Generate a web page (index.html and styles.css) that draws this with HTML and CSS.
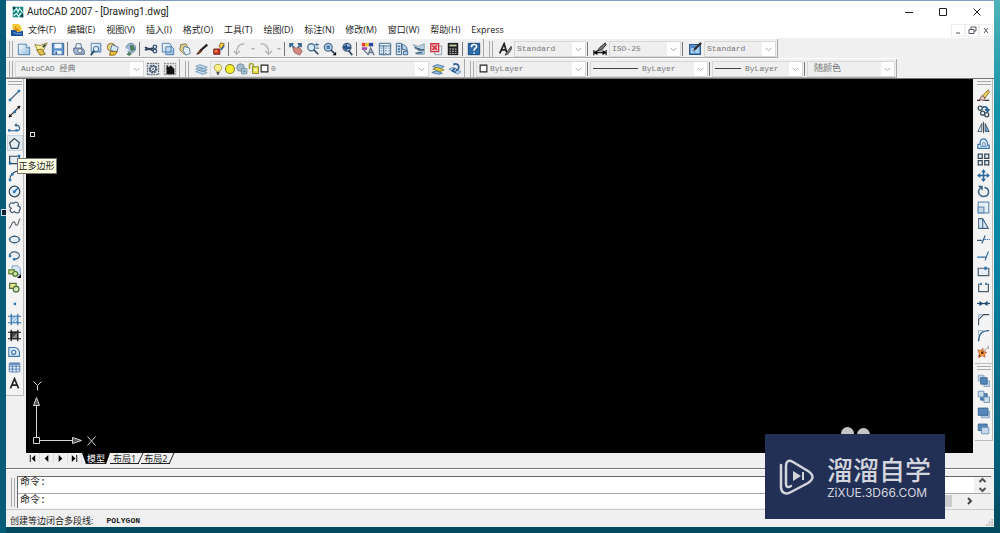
FILE: index.html
```html
<!DOCTYPE html>
<html lang="zh-CN">
<head>
<meta charset="utf-8">
<title>AutoCAD 2007 - [Drawing1.dwg]</title>
<link rel="stylesheet" href="styles.css">
</head>
<body class="desktop">
<svg class="sprite" aria-hidden="true">
<defs><linearGradient id="pale" x2="1" y2="1"><stop stop-color="#fff"/><stop offset="1" stop-color="#8fbbe0"/></linearGradient></defs>
<symbol id="app" viewBox="0 0 16 16"><path fill="#16867e" d="M1 1h14v14H1z"/><path fill="none" stroke="#e8fffa" stroke-width="1.500" d="M2 8l4-5 2 5 2-5 4 6M2 13l4-3 3 4 2-4 4 3"/><path fill="#073c48" d="M1 1h3v3H1zM12 11h3v4h-3z"/></symbol>
<symbol id="dwg" viewBox="0 0 16 16"><path fill="#f5c533" d="M2 0h8l4 4v6H2z"/><path fill="#d58f10" d="M5 3l8 7H5z"/><path fill="#174f9b" d="M0 8l5 0 4 3 7-2v7H0z"/><path stroke="#9cd0f7" d="M3 11l4 2h7" fill="none"/></symbol>
<symbol id="new" viewBox="0 0 16 16"><path fill="url(#pale)" stroke="#4779a8" d="M1.500 2.500h9l4 4v8h-13z"/><path fill="#fff" stroke="#4779a8" d="M10.500 2.500v4h4"/></symbol>
<symbol id="open" viewBox="0 0 16 16"><path fill="#fff2a0" stroke="#8a7a38" d="M1 3l6 1 8-3-4 8-4 6z"/><path fill="#e0c04f" stroke="#7b6b2a" d="M3 9l6-1 4 6-6 1z"/><path stroke="#243e4c" stroke-width="2" d="M10 6l3-3"/></symbol>
<symbol id="save" viewBox="0 0 16 16"><path fill="#5d93cb" stroke="#315f91" d="M1.500 1.500h13v13h-13z"/><path fill="#edf5fc" d="M4 2h8v5H4zM4 10h8v4H4z"/><path fill="#315f91" d="M5 11h2v3H5z"/></symbol>
<symbol id="print" viewBox="0 0 16 16"><path fill="#e9f1fa" stroke="#536b88" d="M4 7l1-5h5l1 5"/><path fill="#a9bdd8" stroke="#3f587a" d="M2 7h10l2 3v4H4l-2-3z"/><circle cx="9" cy="10" r="2.500" fill="#fff" stroke="#3f587a"/></symbol>
<symbol id="preview" viewBox="0 0 16 16"><path fill="url(#pale)" stroke="#4779a8" d="M2.500 1.500h11v10h-11z"/><circle cx="8" cy="8" r="3" fill="#dff1ff" stroke="#3c5e7d"/><path stroke="#23465f" stroke-width="2" d="M6 10l-4 5"/></symbol>
<symbol id="publish" viewBox="0 0 16 16"><circle cx="6" cy="6" r="4.500" fill="#e8d58b" stroke="#896b16"/><path fill="#d9e9f6" stroke="#47698a" d="M7 3l7 3-2 6-7-3z"/><path fill="#f0c541" stroke="#88600e" d="M5 11h8l-3 4H4z"/></symbol>
<symbol id="globe" viewBox="0 0 16 16"><circle cx="9" cy="7" r="5.500" fill="#9db9d4" stroke="#6d8398"/><path fill="#4f8161" d="M8 3l4 1 2 4-4 3-2-3zM7 11l3 3-3 2-3-2z"/><path fill="#e0edf7" d="M2 6l5 3-3 3z"/></symbol>
<symbol id="cut" viewBox="0 0 16 16"><path stroke="#2d4059" stroke-width="2" d="M1 6l10 4M1 9l10-2"/><g fill="none" stroke="#36597e" stroke-width="1.500"><circle cx="12.500" cy="5.500" r="2"/><circle cx="12.500" cy="10.500" r="2"/></g></symbol>
<symbol id="copy" viewBox="0 0 16 16"><path fill="url(#pale)" stroke="#3e77ac" d="M1.500 1.500h8l2 2v8h-10zM5.500 5.500h7l2 2v7h-9z"/></symbol>
<symbol id="paste" viewBox="0 0 16 16"><path fill="#dbc98a" stroke="#86754a" d="M3 3l6-1 4 7-6 5-5-5z"/><path fill="#e7f2fc" stroke="#547ba0" d="M7 5l6 2 1 6-5 2-3-5z"/></symbol>
<symbol id="brush" viewBox="0 0 16 16"><path stroke="#222" stroke-width="2.500" d="M14 3L6 10"/><path fill="#8f3f1c" stroke="#441c0b" d="M6 9l2 1-3 3-3 1z"/></symbol>
<symbol id="block" viewBox="0 0 16 16"><path fill="#ffce31" stroke="#826115" d="M10 1l4 1-3 6-3-3z"/><path fill="#cb3324" stroke="#681912" d="M2 8h7v6H2z"/><path fill="#ef8b4a" d="M3 9h3v3H3z"/><path stroke="#38659a" stroke-width="2" d="M10 9l4-5"/></symbol>
<symbol id="undo" viewBox="0 0 16 16"><path fill="none" stroke="#b4b4b4" stroke-width="1.500" d="M13 2C7 2 4 6 4 13M1 10l3 4 4-4"/></symbol>
<symbol id="redo" viewBox="0 0 16 16"><path fill="none" stroke="#b4b4b4" stroke-width="1.500" d="M2 2c6 0 9 4 9 11M7 10l4 4 4-4"/></symbol>
<symbol id="pan" viewBox="0 0 16 16"><path fill="#d08a7d" stroke="#986560" d="M4 5l4 2 4-1 3 5-3 4-6-3z"/><path stroke="#346990" stroke-width="1.500" d="M1 2l5 4M1 6V2h4M10 2h4v4M14 2l-4 4"/></symbol>
<symbol id="zoom" viewBox="0 0 16 16"><circle cx="6" cy="6" r="4" fill="#d4ecff" stroke="#53728f" stroke-width="1.500"/><path stroke="#334b65" stroke-width="2" d="M9 9l5 5"/><path stroke="#235e9b" d="M10 3h5M12.500 1v4M11 7h4"/></symbol>
<symbol id="zoomwin" viewBox="0 0 16 16"><circle cx="6" cy="6" r="4.500" fill="#b7d3ec" stroke="#53728f" stroke-width="1.500"/><path fill="#537bad" d="M4 4h4v4H4z"/><path stroke="#334b65" stroke-width="2" d="M9 9l4 4"/><path d="M11 15h4v-4z"/></symbol>
<symbol id="zoomprev" viewBox="0 0 16 16"><circle cx="8" cy="6" r="4.500" fill="#a8c9e7" stroke="#425b76" stroke-width="1.500"/><path fill="#234f86" d="M3 6l5-4v3h4v3H8v2z"/><path stroke="#334b65" stroke-width="2" d="M10 10l4 5"/></symbol>
<symbol id="props" viewBox="0 0 16 16"><path fill="#e83b32" d="M1 1h4v4H1z"/><path fill="#f2c329" d="M5 1h4v4H5z"/><path fill="#34449a" d="M9 1h5v4H9z"/><path fill="#a14db0" d="M1 6h6v3H1z"/><path fill="none" stroke="#63768a" stroke-width="1.500" d="M3 9l5 5M8 15l3-8 4 8M9 12h5"/></symbol>
<symbol id="dc" viewBox="0 0 16 16"><path fill="#e2eef8" stroke="#365f86" d="M1.500 1.500h13v13h-13zM1 4.500h14M6.500 4v11"/><path stroke="#4c7aa5" d="M3 7h2M3 10h2M3 13h2M8 7h2M12 7h2M8 10h2M12 10h2M8 13h2M12 13h2"/></symbol>
<symbol id="palette" viewBox="0 0 16 16"><path fill="#dceaf7" stroke="#365f86" d="M1.500 1.500h6v13h-6z"/><path stroke="#4c7aa5" stroke-width="2" d="M3 5h3M3 8h3M3 11h3"/><path fill="#b4d1eb" stroke="#365f86" d="M8 3c4 0 6 3 6 7l-6-2zM9.500 10.500h5v4h-5z"/></symbol>
<symbol id="sheet" viewBox="0 0 16 16"><path fill="#b9cedf" stroke="#8aa2b6" d="M1 3l6 2 7-3v12H6l3-4z"/><path stroke="#486f8d" stroke-width="2" d="M3 6l5 3h6M4 13l8-1"/></symbol>
<symbol id="markup" viewBox="0 0 16 16"><path fill="#e4e8ee" stroke="#8d98a4" d="M6.500 4.500h8v10h-8z"/><path fill="#f6c9cb" stroke="#cf3444" stroke-width="1.500" d="M2 2h9v9H2z"/><path stroke="#cf3444" stroke-width="2" d="M4 4l5 5M9 4L4 9"/></symbol>
<symbol id="calc" viewBox="0 0 16 16"><path fill="#222" d="M2 1h12v14H2z"/><path fill="#c6d7aa" d="M4 3h8v2H4z"/><path stroke="#ddd" stroke-dasharray="2 1" d="M4 8h8M4 10.500h8M4 13h8"/></symbol>
<symbol id="help" viewBox="0 0 16 16"><path fill="#2a6aa8" stroke="#103e70" d="M1.500 1.500h13v13h-13z"/><path fill="none" stroke="#fff" stroke-width="1.800" d="M5 6c0-4 6-4 6-1 0 2-3 2-3 5M8 12v1.500"/></symbol>
<symbol id="textstyle" viewBox="0 0 16 16"><path fill="none" stroke="#222" stroke-width="2" d="M2 13L7 2l3 10M4 9h5"/><path fill="#888" stroke="#333" d="M15 5l-5 7-2 3 4-2 4-6z"/></symbol>
<symbol id="dimstyle" viewBox="0 0 16 16"><path stroke="#222" stroke-width="1.500" d="M1 9v6M15 9v6M1 12h14"/><path d="M1 12l4-3v6zM15 12l-4-3v6z"/><path fill="#777" stroke="#222" d="M14 1L8 6l-3 4 5-1 5-6z"/></symbol>
<symbol id="tabstyle" viewBox="0 0 16 16"><path fill="#abd2f4" stroke="#1e538c" stroke-width="1.500" d="M2 3h12v11H2z"/><path fill="#4c87c4" d="M3 4h7v3H3z"/><path stroke="#1e538c" d="M5 9l3 3"/><path stroke="#333" stroke-width="2.500" d="M15 1L7 9"/></symbol>
<symbol id="gear" viewBox="0 0 16 16"><path fill="#d5dee7" stroke="#444" stroke-dasharray="2 1" d="M1.500 1.500h13v13h-13z"/><circle cx="8" cy="8" r="4" fill="#e4edf5" stroke="#456" stroke-width="2" stroke-dasharray="2 1"/><circle cx="8" cy="8" r="3" fill="none" stroke="#456"/><circle cx="8" cy="8" r="1" fill="#456"/></symbol>
<symbol id="home" viewBox="0 0 16 16"><path fill="#ddd" stroke="#777" stroke-dasharray="2 1" d="M1.500 1.500h13v13h-13z"/><path fill="#111" d="M3 8l1-1V4h2v2l3-2 4 4v6H4V8z"/></symbol>
<symbol id="layers" viewBox="0 0 16 16"><path fill="#c3d9ed" stroke="#6f92b4" d="M2 11l5-2 8 3-5 2zM2 8l5-2 8 3-5 2zM2 5l5-2 8 3-5 2z"/></symbol>
<symbol id="bulb" viewBox="0 0 16 16"><path fill="#fff48a" stroke="#948930" d="M5.500 11L3 7C2 0 14 0 13 7l-2.500 4z"/><path stroke="#555" stroke-width="2" d="M6 13h4M7 15h2"/></symbol>
<symbol id="sun" viewBox="0 0 16 16"><circle cx="8" cy="8" r="6" fill="#f4ec2e" stroke="#86822b" stroke-width="1.500"/></symbol>
<symbol id="freeze" viewBox="0 0 16 16"><circle cx="6" cy="6" r="5" fill="#a5bdd1" stroke="#61798e"/><path fill="#c4d8e6" stroke="#61798e" d="M7.500 7.500h7v7h-7z"/><circle cx="11" cy="11" r="2" fill="#7c9fb8"/></symbol>
<symbol id="lock" viewBox="0 0 16 16"><path fill="none" stroke="#a5a02a" stroke-width="2" d="M2 8V3c0-3 5-3 5 0v5"/><path fill="#e1dc36" stroke="#777225" d="M6 5h8v9H6z"/><path fill="#f4f1b4" d="M8 7h4v4H8z"/></symbol>
<symbol id="square" viewBox="0 0 16 16"><path fill="#fff" stroke="#222" stroke-width="2" d="M2 2h12v12H2z"/></symbol>
<symbol id="laycur" viewBox="0 0 16 16"><path fill="#98c2e6" stroke="#446f99" d="M2 5l5-2 8 2-5 3z"/><path fill="#e3d337" stroke="#87822f" d="M2 8l5-2 8 3-5 2z"/><path fill="#98c2e6" stroke="#446f99" d="M1 12l5-2 7 3-4 1z"/></symbol>
<symbol id="layprev" viewBox="0 0 16 16"><path fill="#b4d1ea" stroke="#6f92b4" d="M1 8l5-2 9 5-4 3z"/><path fill="none" stroke="#345f96" stroke-width="2" d="M6 3c6-3 9 4 3 7M8 7l-3 3 4 2"/></symbol>
<symbol id="line" viewBox="0 0 16 16"><path stroke="#3f586e" stroke-width="1.500" d="M2 14L14 2"/><path fill="#2876b4" d="M1 12h3v3H1zM12 1h3v3h-3z"/></symbol>
<symbol id="xline" viewBox="0 0 16 16"><path stroke="#222" stroke-width="1.300" d="M1 15L15 1"/><path d="M1 15l1-4 3 3zM15 1l-4 1 3 3z"/><path fill="#2876b4" d="M7 7h3v3H7z"/></symbol>
<symbol id="pline" viewBox="0 0 16 16"><path fill="none" stroke="#345f87" stroke-width="1.500" d="M1 12h10c5 0 4-7-1-7H8M10 3v4"/><path fill="#2876b4" d="M0 10h3v3H0zM9 10h3v3H9z"/></symbol>
<symbol id="polygon" viewBox="0 0 16 16"><path fill="#e5edf3" stroke="#344a5b" stroke-width="1.500" d="M8 2l6 5-2 7H4L2 7z"/></symbol>
<symbol id="rect" viewBox="0 0 16 16"><path fill="#e5edf3" stroke="#344a5b" stroke-width="1.500" d="M2 4h12v9H2z"/><path fill="#2876b4" d="M12 2h3v3h-3zM1 11h3v3H1z"/></symbol>
<symbol id="arc" viewBox="0 0 16 16"><path fill="none" stroke="#344a5b" stroke-width="1.500" d="M2 14C2 7 7 3 14 2"/><path fill="#2876b4" d="M1 12h3v3H1zM4 5h3v3H4z"/></symbol>
<symbol id="circle" viewBox="0 0 16 16"><circle cx="8" cy="8" r="6.500" fill="#e5f1fb" stroke="#344a5b" stroke-width="1.500"/><path stroke="#2876b4" stroke-width="2" d="M7 9l5-5"/><path fill="#2876b4" d="M6 7h3v3H6z"/></symbol>
<symbol id="cloud" viewBox="0 0 16 16"><path fill="none" stroke="#4d6375" stroke-width="1.500" d="M4 9C-1 6 3 0 7 3c2-3 8-1 5 3 5 1 3 5 2 5 1 5-5 4-6 2-4 3-7-1-4-4z"/></symbol>
<symbol id="spline" viewBox="0 0 16 16"><path fill="none" stroke="#4d5a67" stroke-width="1.300" d="M1 14c3 0 3-8 6-8 3 0 1 5 4 4 2 0 2-7 4-8"/></symbol>
<symbol id="ellipse" viewBox="0 0 16 16"><ellipse cx="8" cy="8" rx="6" ry="4" fill="#e5f1fb" stroke="#344a5b" stroke-width="1.500"/><path fill="#2876b4" d="M1 7h2v2H1zM13 7h2v2h-2zM7 3h2v2H7zM7 11h2v2H7z"/></symbol>
<symbol id="ellarc" viewBox="0 0 16 16"><path fill="none" stroke="#3f5f7b" stroke-width="1.500" d="M2 9C1 2 14 2 14 8c0 4-5 5-7 4"/><path fill="#2876b4" d="M1 7h3v3H1zM6 11h3v3H6z"/></symbol>
<symbol id="insert" viewBox="0 0 16 16"><path fill="#d9e8f5" stroke="#6a95be" d="M5 1h7l3 3v8H5z"/><path fill="#d9df8d" stroke="#57823c" stroke-width="1.500" d="M1 6h7v5H1z"/><circle cx="9" cy="11" r="3" fill="#d1e2a6" stroke="#47722c" stroke-width="1.500"/><path d="M11 16h5v-5z"/></symbol>
<symbol id="mkblock" viewBox="0 0 16 16"><path fill="#e3e593" stroke="#57723c" stroke-width="1.500" d="M2 3h8v6H2z"/><circle cx="10" cy="10" r="3.500" fill="#dce9c2" stroke="#47722c" stroke-width="1.500"/></symbol>
<symbol id="point" viewBox="0 0 16 16"><path fill="#2876b4" d="M7 7h3v3H7z"/></symbol>
<symbol id="hatch" viewBox="0 0 16 16"><path fill="#c9e1f5" d="M3 3h10v10H3z"/><path stroke="#3973a7" stroke-width="1.500" d="M0 4h16M0 12h16M4 1v14M12 1v14"/><path stroke="#6fa1cf" d="M4 9l5-5M5 12l7-7M9 12l3-3"/></symbol>
<symbol id="grad" viewBox="0 0 16 16"><path fill="#888" d="M3 3h10v10H3z"/><path fill="#444" d="M3 3h10L3 13z"/><path stroke="#151a1f" stroke-width="1.500" d="M0 4h16M0 12h16M4 1v14M12 1v14"/></symbol>
<symbol id="region" viewBox="0 0 16 16"><path fill="#dbeaf7" stroke="#3e77ac" stroke-width="1.300" d="M1 3h7c5 0 7 5 6 11H1z"/><circle cx="7" cy="9" r="2.500" fill="#fff" stroke="#3e77ac" stroke-width="1.500"/></symbol>
<symbol id="table" viewBox="0 0 16 16"><path fill="#dbeaf7" stroke="#4f78ad" d="M1.500 2.500h13v11h-13zM1 6.500h14M1 10h14M5.500 3v11M10 3v11"/><path fill="#6890c2" d="M2 2h12v3H2z"/></symbol>
<symbol id="mtext" viewBox="0 0 16 16"><path fill="none" stroke="#222" stroke-width="2" d="M3 14L8 2l5 12M5 10h6"/></symbol>
<symbol id="erase" viewBox="0 0 16 16"><path fill="#eed14d" stroke="#6e6130" d="M14 1L7 8l3 3 5-7z"/><path fill="#e8c9c6" stroke="#714b4b" d="M6 8l4 3-2 3-5-1z"/><path stroke="#333" stroke-width="1.500" d="M0 14h4M9 14h6"/></symbol>
<symbol id="copyobj" viewBox="0 0 16 16"><g fill="#eee" stroke="#344a5b" stroke-width="1.500"><circle cx="4" cy="4" r="2.500"/><circle cx="7" cy="10" r="2.500"/><circle cx="12" cy="12" r="2.500"/></g><path fill="none" stroke="#205b91" stroke-width="2" d="M7 3c4-2 6 0 6 4M10 5l3 3 2-3"/></symbol>
<symbol id="mirror" viewBox="0 0 16 16"><path fill="#d9e3ec" stroke="#344a5b" d="M6 3v10H1z"/><path fill="#70a4d5" stroke="#344a5b" d="M10 3v10h5z"/><path stroke="#222" d="M8 1v14"/></symbol>
<symbol id="offset" viewBox="0 0 16 16"><path fill="#dceaf7" stroke="#3e77ac" stroke-width="1.500" d="M1 14h14v-4h-2C14 0 2 0 4 9H1z"/><path fill="none" stroke="#3e77ac" d="M4 11.500h8M7 11c-1-6 4-6 3 0"/></symbol>
<symbol id="array" viewBox="0 0 16 16"><path fill="#e5ebef" stroke="#344a5b" stroke-width="1.500" d="M1.500 1.500h5v5h-5zM9.500 1.500h5v5h-5zM1.500 9.500h5v5h-5zM9.500 9.500h5v5h-5z"/></symbol>
<symbol id="move" viewBox="0 0 16 16"><path stroke="#2e699e" stroke-width="2" d="M8 2v12M2 8h12"/><path fill="#2e699e" d="M8 0l3 4H5zM8 16l3-4H5zM0 8l4-3v6zM16 8l-4-3v6z"/></symbol>
<symbol id="rotate" viewBox="0 0 16 16"><path fill="none" stroke="#456b8d" stroke-width="2" d="M4 4c-5 5 0 11 5 10 7-1 7-10 0-11"/><path fill="#345f87" d="M1 1h6v6z"/></symbol>
<symbol id="scale" viewBox="0 0 16 16"><path fill="#e7f0f8" stroke="#6a91b5" stroke-width="1.500" d="M1.500 1.500h13v13h-13z"/><path fill="#c5d8ea" stroke="#6a91b5" stroke-width="1.500" d="M1.500 7.500h7v7h-7z"/></symbol>
<symbol id="stretch" viewBox="0 0 16 16"><path fill="#dceaf6" stroke="#47688a" stroke-width="1.300" d="M2 2h5v12H2zM7 2l7 12H7"/></symbol>
<symbol id="trim" viewBox="0 0 16 16"><path stroke="#355a7b" stroke-width="1.500" d="M0 9h6M6 13l4-10"/><path stroke="#2d78b5" stroke-width="1.500" stroke-dasharray="2 1" d="M9 8h7"/></symbol>
<symbol id="extend" viewBox="0 0 16 16"><path stroke="#2d78b5" stroke-width="1.500" d="M0 10h6M10 14l4-11"/><path stroke="#355a7b" stroke-width="1.500" d="M6 10h5"/></symbol>
<symbol id="breakpt" viewBox="0 0 16 16"><path fill="#e7edf2" stroke="#4d6170" stroke-width="1.500" d="M1.500 4h13v9h-13z"/><path fill="#2876b4" d="M9 2h3v4H9z"/></symbol>
<symbol id="breaks" viewBox="0 0 16 16"><path fill="none" stroke="#4d6170" stroke-width="1.500" d="M5 4H2v9h12V4h-3"/><path fill="#2876b4" d="M4 2h2v3H4zM10 2h2v3h-2z"/></symbol>
<symbol id="join" viewBox="0 0 16 16"><path stroke="#244c70" stroke-width="1.500" d="M0 8h16"/><path fill="#244c70" d="M3 5l5 3-5 3zM13 5L8 8l5 3z"/></symbol>
<symbol id="chamfer" viewBox="0 0 16 16"><path fill="none" stroke="#394a58" stroke-width="1.300" d="M2 15V8l6-6h7"/><path fill="none" stroke="#71a0ce" d="M2 7V2h5"/></symbol>
<symbol id="fillet" viewBox="0 0 16 16"><path fill="none" stroke="#315e8b" stroke-width="1.800" d="M2 15C2 6 6 2 15 2"/><path fill="none" stroke="#7aa4ce" d="M2 8V2h6"/></symbol>
<symbol id="explode" viewBox="0 0 16 16"><path fill="#f6a43a" stroke="#b85a34" d="M1 6l4 1 2-3 1 4 4 1-3 2 1 4-4-2-4 3 1-5z"/><path fill="#6f2818" d="M5 8h3v3H5zM2 12h2v2H2z"/><path fill="none" stroke="#aaa" stroke-width="1.500" d="M9 7l2-2M11 4h3V1"/></symbol>
<symbol id="front" viewBox="0 0 16 16"><path fill="#bcd2e7" stroke="#819fbd" d="M1.500 1.500h7v7h-7zM8.500 8.500h7v7h-7z"/><path fill="#5687bb" stroke="#315d8a" d="M4.500 4.500h8v8h-8z"/></symbol>
<symbol id="back" viewBox="0 0 16 16"><path fill="#5687bb" stroke="#315d8a" d="M4.500 4.500h8v8h-8z"/><path fill="#c9dceb" stroke="#6386a9" d="M1.500 1.500h7v7h-7zM8.500 8.500h7v7h-7z"/></symbol>
<symbol id="above" viewBox="0 0 16 16"><path fill="#b7cce2" stroke="#819fbd" d="M5.500 6.500h10v8h-10z"/><path fill="#5687bb" stroke="#315d8a" d="M1.500 2.500h12v9h-12z"/></symbol>
<symbol id="under" viewBox="0 0 16 16"><path fill="#5687bb" stroke="#315d8a" d="M1.500 2.500h11v8h-11z"/><path fill="#c5d9ec" stroke="#6386a9" d="M5.500 6.500h9v8h-9z"/></symbol>
<symbol id="chev" viewBox="0 0 16 16"><path fill="none" stroke="#999" stroke-width="1.500" d="M3 6l5 5 5-5"/></symbol>
</svg>

<div class="window">
  <header class="titlebar">
    <svg class="icon small"><use href="#app"/></svg>
    <h1 class="title">AutoCAD 2007 - [Drawing1.dwg]</h1>
    <div class="captions">
      <button class="caption" aria-label="最小化"><svg viewBox="0 0 10 10"><path d="M1 5.500h8"/></svg></button>
      <button class="caption" aria-label="最大化"><svg viewBox="0 0 10 10"><path d="M1.500 1.500h7v7h-7z"/></svg></button>
      <button class="caption" aria-label="关闭"><svg viewBox="0 0 10 10"><path d="M1.500 1.500l7 7M8.500 1.500l-7 7"/></svg></button>
    </div>
  </header>
  <nav class="menubar">
    <svg class="icon small"><use href="#dwg"/></svg>
    <div class="menus"><button class="menu">文件(F)</button><button class="menu">编辑(E)</button><button class="menu">视图(V)</button><button class="menu">插入(I)</button><button class="menu">格式(O)</button><button class="menu">工具(T)</button><button class="menu">绘图(D)</button><button class="menu">标注(N)</button><button class="menu">修改(M)</button><button class="menu">窗口(W)</button><button class="menu">帮助(H)</button><button class="menu">Express</button></div>
    <div class="mdi">
      <button aria-label="最小化文档"><svg viewBox="0 0 10 10"><path d="M3 8h4"/></svg></button>
      <button aria-label="还原文档"><svg viewBox="0 0 10 10"><path d="M4 4V2h5v4H7M2 4.500h5v4H2z"/></svg></button>
      <button aria-label="关闭文档"><svg viewBox="0 0 10 10"><path d="M3 3l4 5M7 3L3 8"/></svg></button>
    </div>
  </nav>

  <div class="toolbars">
    <div class="row">
      <div class="bar">
        <i class="grip"></i>
        <button class="tool" aria-label="新建"><svg class="icon"><use href="#new"/></svg></button>
        <button class="tool" aria-label="打开"><svg class="icon"><use href="#open"/></svg></button>
        <button class="tool" aria-label="保存"><svg class="icon"><use href="#save"/></svg></button>
        <i class="sep"></i>
        <button class="tool" aria-label="打印"><svg class="icon"><use href="#print"/></svg></button>
        <button class="tool" aria-label="打印预览"><svg class="icon"><use href="#preview"/></svg></button>
        <button class="tool" aria-label="发布"><svg class="icon"><use href="#publish"/></svg></button>
        <button class="tool" aria-label="三维 DWF"><svg class="icon"><use href="#globe"/></svg></button>
        <i class="sep"></i>
        <button class="tool" aria-label="剪切"><svg class="icon"><use href="#cut"/></svg></button>
        <button class="tool" aria-label="复制"><svg class="icon"><use href="#copy"/></svg></button>
        <button class="tool" aria-label="粘贴"><svg class="icon"><use href="#paste"/></svg></button>
        <button class="tool" aria-label="特性匹配"><svg class="icon"><use href="#brush"/></svg></button>
        <button class="tool" aria-label="块编辑器"><svg class="icon"><use href="#block"/></svg></button>
        <i class="sep"></i>
        <button class="tool" aria-label="放弃"><svg class="icon"><use href="#undo"/></svg></button>
        <button class="drop" aria-label="放弃列表"></button>
        <button class="tool" aria-label="重做"><svg class="icon"><use href="#redo"/></svg></button>
        <button class="drop" aria-label="重做列表"></button>
        <i class="sep"></i>
        <button class="tool" aria-label="实时平移"><svg class="icon"><use href="#pan"/></svg></button>
        <button class="tool" aria-label="实时缩放"><svg class="icon"><use href="#zoom"/></svg></button>
        <button class="tool" aria-label="窗口缩放"><svg class="icon"><use href="#zoomwin"/></svg></button>
        <button class="tool" aria-label="缩放上一个"><svg class="icon"><use href="#zoomprev"/></svg></button>
        <i class="sep"></i>
        <button class="tool" aria-label="特性"><svg class="icon"><use href="#props"/></svg></button>
        <button class="tool" aria-label="设计中心"><svg class="icon"><use href="#dc"/></svg></button>
        <button class="tool" aria-label="工具选项板"><svg class="icon"><use href="#palette"/></svg></button>
        <button class="tool" aria-label="图纸集管理器"><svg class="icon"><use href="#sheet"/></svg></button>
        <button class="tool" aria-label="标记集管理器"><svg class="icon"><use href="#markup"/></svg></button>
        <button class="tool" aria-label="快速计算器"><svg class="icon"><use href="#calc"/></svg></button>
        <i class="sep"></i>
        <button class="tool" aria-label="帮助"><svg class="icon"><use href="#help"/></svg></button>
      </div>
      <div class="bar">
        <i class="grip"></i>
        <button class="tool wide" aria-label="文字样式管理器"><svg class="icon"><use href="#textstyle"/></svg></button>
        <label class="combo style"><select aria-label="文字样式"><option>Standard</option></select><svg class="chev"><use href="#chev"/></svg></label>
        <i class="sep"></i>
        <button class="tool wide" aria-label="标注样式管理器"><svg class="icon"><use href="#dimstyle"/></svg></button>
        <label class="combo style"><select aria-label="标注样式"><option>ISO-25</option></select><svg class="chev"><use href="#chev"/></svg></label>
        <i class="sep"></i>
        <button class="tool wide" aria-label="表格样式管理器"><svg class="icon"><use href="#tabstyle"/></svg></button>
        <label class="combo style"><select aria-label="表格样式"><option>Standard</option></select><svg class="chev"><use href="#chev"/></svg></label>
      </div>
    </div>
    <div class="row">
      <div class="bar">
        <i class="grip"></i>
        <label class="combo workspace-list"><select aria-label="工作空间"><option>AutoCAD 经典</option></select><svg class="chev"><use href="#chev"/></svg></label>
        <button class="tool" aria-label="工作空间设置"><svg class="icon"><use href="#gear"/></svg></button>
        <button class="tool" aria-label="我的工作空间"><svg class="icon"><use href="#home"/></svg></button>
      </div>
      <div class="bar">
        <i class="grip"></i>
        <button class="tool wide" aria-label="图层特性管理器"><svg class="icon"><use href="#layers"/></svg></button>
        <label class="combo layer-list"><span class="states"><svg><use href="#bulb"/></svg><svg><use href="#sun"/></svg><svg><use href="#freeze"/></svg><svg><use href="#lock"/></svg><svg class="swatch"><use href="#square"/></svg></span><select aria-label="图层"><option>0</option></select><svg class="chev"><use href="#chev"/></svg></label>
        <button class="tool" aria-label="置为当前图层"><svg class="icon"><use href="#laycur"/></svg></button>
        <button class="tool" aria-label="上一个图层"><svg class="icon"><use href="#layprev"/></svg></button>
      </div>
      <div class="bar">
        <i class="grip"></i>
        <label class="combo color-list"><svg class="swatch"><use href="#square"/></svg><select aria-label="颜色"><option>ByLayer</option></select><svg class="chev"><use href="#chev"/></svg></label>
        <i class="sep"></i>
        <label class="combo type-list"><i class="stroke long"></i><select aria-label="线型"><option>ByLayer</option></select><svg class="chev"><use href="#chev"/></svg></label>
        <i class="sep"></i>
        <label class="combo weight-list"><i class="stroke"></i><select aria-label="线宽"><option>ByLayer</option></select><svg class="chev"><use href="#chev"/></svg></label>
        <i class="sep"></i>
        <label class="combo plot-list"><select aria-label="打印样式"><option>随颜色</option></select><svg class="chev"><use href="#chev"/></svg></label>
      </div>
    </div>
  </div>

  <main class="workspace">
    <aside class="side">
      <div class="vbar">
        <i class="vgrip"></i>
        <button class="vtool" aria-label="直线"><svg><use href="#line"/></svg></button>
        <button class="vtool" aria-label="构造线"><svg><use href="#xline"/></svg></button>
        <button class="vtool" aria-label="多段线"><svg><use href="#pline"/></svg></button>
        <button class="vtool hover" aria-describedby="tip" aria-label="正多边形"><svg><use href="#polygon"/></svg><span class="tooltip" id="tip" role="tooltip">正多边形</span></button>
        <button class="vtool" aria-label="矩形"><svg><use href="#rect"/></svg></button>
        <button class="vtool" aria-label="圆弧"><svg><use href="#arc"/></svg></button>
        <button class="vtool" aria-label="圆"><svg><use href="#circle"/></svg></button>
        <button class="vtool" aria-label="修订云线"><svg><use href="#cloud"/></svg></button>
        <button class="vtool" aria-label="样条曲线"><svg><use href="#spline"/></svg></button>
        <button class="vtool" aria-label="椭圆"><svg><use href="#ellipse"/></svg></button>
        <button class="vtool" aria-label="椭圆弧"><svg><use href="#ellarc"/></svg></button>
        <button class="vtool" aria-label="插入块"><svg><use href="#insert"/></svg></button>
        <button class="vtool" aria-label="创建块"><svg><use href="#mkblock"/></svg></button>
        <button class="vtool" aria-label="点"><svg><use href="#point"/></svg></button>
        <button class="vtool" aria-label="图案填充"><svg><use href="#hatch"/></svg></button>
        <button class="vtool" aria-label="渐变色"><svg><use href="#grad"/></svg></button>
        <button class="vtool" aria-label="面域"><svg><use href="#region"/></svg></button>
        <button class="vtool" aria-label="表格"><svg><use href="#table"/></svg></button>
        <button class="vtool" aria-label="多行文字"><svg><use href="#mtext"/></svg></button>
      </div>
    </aside>
    <section class="document">
      <div class="canvas">
        <i class="pickbox"></i>
        <svg class="ucs" viewBox="0 0 68 70"><g fill="none" stroke="#d5d5d5"><path d="M3.500 57.500h6v6h-6zM6.500 57V19M10 60.500h36"/><path fill="#555" d="M3.500 25.500l3-8 3 8zM42.500 57.500l9 3-9 3z"/><path d="M3.500 1.500l4 4 4-4M7.500 5.500v5M57.500 56.500l8 9M65.500 56.500l-8 9"/></g></svg>
        <i class="blob first"></i><i class="blob"></i>
      </div>
      <div class="tabs">
        <button class="nav" aria-label="第一个"><svg viewBox="0 0 10 10"><path d="M2 1h1v8H2zM8 1v8L4 5z"/></svg></button>
        <button class="nav" aria-label="上一个"><svg viewBox="0 0 10 10"><path d="M7 1v8L3 5z"/></svg></button>
        <button class="nav" aria-label="下一个"><svg viewBox="0 0 10 10"><path d="M3 1v8l4-4z"/></svg></button>
        <button class="nav" aria-label="最后一个"><svg viewBox="0 0 10 10"><path d="M7 1h1v8H7zM2 1v8l4-4z"/></svg></button>
        <button class="tab active">模型</button><button class="tab">布局1</button><button class="tab">布局2</button>
      </div>
    </section>
    <aside class="side right">
      <div class="vbar">
        <i class="vgrip"></i>
        <button class="vtool" aria-label="删除"><svg><use href="#erase"/></svg></button>
        <button class="vtool" aria-label="复制对象"><svg><use href="#copyobj"/></svg></button>
        <button class="vtool" aria-label="镜像"><svg><use href="#mirror"/></svg></button>
        <button class="vtool" aria-label="偏移"><svg><use href="#offset"/></svg></button>
        <button class="vtool" aria-label="阵列"><svg><use href="#array"/></svg></button>
        <button class="vtool" aria-label="移动"><svg><use href="#move"/></svg></button>
        <button class="vtool" aria-label="旋转"><svg><use href="#rotate"/></svg></button>
        <button class="vtool" aria-label="缩放"><svg><use href="#scale"/></svg></button>
        <button class="vtool" aria-label="拉伸"><svg><use href="#stretch"/></svg></button>
        <button class="vtool" aria-label="修剪"><svg><use href="#trim"/></svg></button>
        <button class="vtool" aria-label="延伸"><svg><use href="#extend"/></svg></button>
        <button class="vtool" aria-label="打断于点"><svg><use href="#breakpt"/></svg></button>
        <button class="vtool" aria-label="打断"><svg><use href="#breaks"/></svg></button>
        <button class="vtool" aria-label="合并"><svg><use href="#join"/></svg></button>
        <button class="vtool" aria-label="倒角"><svg><use href="#chamfer"/></svg></button>
        <button class="vtool" aria-label="圆角"><svg><use href="#fillet"/></svg></button>
        <button class="vtool" aria-label="分解"><svg><use href="#explode"/></svg></button>
      </div>
      <div class="vbar">
        <i class="vgrip"></i>
        <button class="vtool" aria-label="前置"><svg><use href="#front"/></svg></button>
        <button class="vtool" aria-label="后置"><svg><use href="#back"/></svg></button>
        <button class="vtool" aria-label="置于对象之上"><svg><use href="#above"/></svg></button>
        <button class="vtool" aria-label="置于对象之下"><svg><use href="#under"/></svg></button>
      </div>
    </aside>
  </main>

  <section class="command">
    <i class="grip"></i>
    <div class="console">
      <div class="history"><output>命令:</output><span class="vscroll"><svg viewBox="0 0 10 16"><path d="M2 5l3-3 3 3M2 11l3 3 3-3"/></svg></span></div>
      <div class="entry"><label for="cmd">命令:</label><input id="cmd" type="text"><span class="hscroll"><i class="thumb"></i><svg viewBox="0 0 10 10"><path d="M3 2l3 3-3 3"/></svg></span></div>
    </div>
  </section>
  <footer class="status"><span>创建等边闭合多段线:</span><span class="cmdname">POLYGON</span><svg class="resize" viewBox="0 0 10 10"><path d="M7 1h2v2H7zM7 4h2v2H7zM4 4h2v2H4zM7 7h2v2H7zM4 7h2v2H4zM1 7h2v2H1z"/></svg></footer>
</div>
<i class="marker"></i>
<div class="brand">
  <svg class="logo" viewBox="0 0 36 38"><g fill="none" stroke="#d3d5dd" stroke-width="2.500" stroke-linejoin="round" stroke-linecap="round"><path d="M2 7v22c0 6 5 8 10 5l17-9c6-4 6-8 0-12L14 4C9 1 7 4 7 8v18c0 3 2 4 5 2"/></g><path fill="#d3d5dd" d="M14 13l8 5-8 5zM23 14h2v8h-2z"/></svg>
  <div class="words"><strong>溜溜自学</strong><span>ZiXUE.3D66.COM</span></div>
</div>
</body>
</html>
```
FILE: styles.css
```css
* { box-sizing: border-box; }

.desktop {
  margin: 0;
  height: 100vh;
  padding: 0 6px 6px;
  position: relative;
  overflow: hidden;
  background:
    linear-gradient(90deg, #075d77 0 6px, transparent 6px),
    linear-gradient(180deg, #4fb3ba 0%, #1694a8 20%, #0784a4 50%, #05607a 85%, #04495f 100%);
  font-family: "Open Sans", "Noto Sans CJK SC", sans-serif;
  font-size: 9px;
  color: #222;
}

.sprite { position: absolute; width: 0; height: 0; }

button {
  border: 0;
  padding: 0;
  background: none;
  font: inherit;
  color: inherit;
}

.window {
  height: 100%;
  display: flex;
  flex-direction: column;
  background: #f0f0f0;
  border-top: 1px solid #7d9cc0;
}

.icon { width: 14px; height: 14px; display: block; flex: none; }
.small { width: 12px; height: 12px; }

/* Title and menus */
.titlebar {
  height: 21px;
  display: flex;
  align-items: center;
  padding-left: 6px;
  gap: 3px;
  background: #fff;
}
.title { margin: 0; font: 400 10px/14px Roboto, sans-serif; }
.captions { margin-left: auto; display: flex; }
.caption { width: 34px; height: 20px; display: grid; place-items: center; }
.caption svg { width: 10px; height: 10px; fill: none; stroke: #222; }

.menubar {
  height: 16px;
  display: flex;
  align-items: center;
  padding-left: 5px;
  background: #fff;
}
.menus { display: flex; gap: 1px; }
.menu { line-height: 14px; padding: 0 5px; white-space: nowrap; }
.mdi { margin-left: auto; display: flex; padding-right: 1px; }
.mdi button { width: 14px; height: 13px; border: 1px solid #eee; display: grid; place-items: center; }
.mdi svg { width: 10px; height: 10px; fill: none; stroke: #556; }

/* Docked toolbars */
.toolbars { border-bottom: 1px solid #777; }
.row { display: flex; height: 20px; }
.bar {
  display: flex;
  align-items: center;
  padding: 0 2px 0 3px;
  border: solid #fff;
  border-width: 1px 0 0;
  box-shadow: inset -1px -1px #a9a9a9;
}
.bar + .bar { padding-left: 5px; }
.grip {
  width: 4px;
  height: 16px;
  margin-right: 2px;
  border: 1px solid #aaa;
  border-width: 0 1px;
  flex: none;
}
.sep { width: 1px; height: 14px; margin: 0 2px 0 1px; background: #777; flex: none; }
.tool { width: 17px; height: 17px; display: grid; place-items: center; flex: none; }
.wide { width: 19px; }
.drop { width: 9px; height: 16px; display: grid; place-items: center; }
.drop::before { content: ""; border: 2px solid transparent; border-top-color: #aaa; border-bottom: 0; }

.combo {
  height: 16px;
  display: flex;
  align-items: center;
  border: 1px solid #d8d8d8;
  background: #efefef;
  color: #777;
}
.combo select {
  flex: 1;
  min-width: 0;
  height: 14px;
  border: 0;
  padding: 0 0 0 2px;
  appearance: none;
  background: none;
  color: inherit;
  font: 8px/14px "Liberation Mono", "Noto Sans CJK SC", monospace;
}
.chev { width: 13px; height: 14px; padding: 2px; background: #fff; flex: none; }
.swatch { width: 9px; height: 9px; margin-left: 2px; flex: none; }
.states { display: flex; align-items: center; padding-left: 1px; }
.states svg { width: 12px; height: 12px; }
.states .swatch { width: 9px; height: 9px; margin-left: 0; }
.stroke { width: 26px; height: 1px; margin: 0 2px; background: #444; flex: none; }
.stroke.long { width: 45px; }
.style { width: 72px; }
.workspace-list { width: 129px; }
.workspace-list select { padding-left: 5px; }
.layer-list { width: 219px; }
.color-list { width: 110px; }
.type-list { width: 118px; }
.weight-list { width: 91px; }
.plot-list { width: 88px; }
.plot-list select { font-size: 9px; padding-left: 6px; }

/* Drawing area */
.workspace { flex: 1; min-height: 0; display: flex; }
.side { width: 20px; flex: none; }
.right { width: 21px; padding-left: 2px; }
.vbar {
  width: 18px;
  padding: 2px 0 4px;
  display: flex;
  flex-direction: column;
  align-items: center;
  background: #f4f4f4;
  border: solid #bbb;
  border-width: 0 1px 1px 0;
}
.vgrip { width: 14px; height: 4px; margin-bottom: 2px; border: 1px solid #aaa; border-width: 1px 0; }
.vtool { width: 16px; height: 16px; display: grid; place-items: center; position: relative; flex: none; }
.vtool svg { width: 13px; height: 13px; }
.hover { background: #e1e9f0; box-shadow: inset 0 0 0 1px #c8d5e0; }
.tooltip {
  position: absolute;
  z-index: 2;
  left: 10px;
  top: 23px;
  padding: 0 1px;
  border: 1px solid #777;
  background: #ffffe1;
  color: #222;
  line-height: 14px;
  white-space: nowrap;
}

.document { flex: 1; min-width: 0; display: flex; flex-direction: column; }
.canvas { flex: 1; position: relative; background: #000; overflow: hidden; }
.pickbox { position: absolute; left: 4px; top: 53px; width: 5px; height: 5px; border: 1px solid #ddd; }
.ucs { position: absolute; left: 4px; bottom: 3px; width: 68px; height: 70px; }
.blob { position: absolute; right: 103px; bottom: 12px; width: 13px; height: 13px; border-radius: 50%; background: #c6c6c6; }
.blob.first { right: 119px; bottom: 13px; }

.tabs { height: 12px; display: flex; }
.nav { width: 14px; height: 11px; display: grid; place-items: center; border-right: 1px solid #ddd; }
.nav svg { width: 9px; height: 9px; }
.tab {
  position: relative;
  height: 11px;
  padding: 0 3px;
  line-height: 11px;
  border-bottom: 1px solid #222;
  margin-right: 2px;
  white-space: nowrap;
}
.tab::after {
  content: "";
  position: absolute;
  right: -2px;
  top: 0;
  width: 1px;
  height: 11px;
  background: #222;
  transform: skewX(-24deg);
}
.tab.active {
  margin: 0;
  padding: 0 5px;
  background: #000;
  color: #fff;
  clip-path: polygon(0 0, 100% 0, calc(100% - 4px) 100%, 4px 100%);
}

/* Command line */
.command {
  display: flex;
  margin-top: 3px;
  padding: 7px 3px 1px 5px;
  border-top: 1px solid #777;
  box-shadow: inset 0 1px #fff;
}
.command .grip { height: 29px; align-self: center; }
.console {
  flex: 1;
  border: solid #666;
  border-width: 1px 0 0 1px;
  background: #fff;
  font: 10px/12px "Liberation Mono", "Noto Sans CJK SC", monospace;
}
.history, .entry { display: flex; padding-left: 2px; }
.history { height: 17px; border-bottom: 1px solid #aaa; }
.entry { height: 14px; align-items: center; }
.entry input { flex: 1; min-width: 0; height: 12px; border: 0; padding: 0 4px; font: inherit; }
.vscroll { margin-left: auto; width: 17px; height: 16px; background: #f0f0f0; }
.vscroll svg { width: 17px; height: 16px; fill: none; stroke: #555; stroke-width: 2; }
.hscroll { width: 20%; height: 14px; display: flex; align-items: center; padding-right: 16px; background: #f0f0f0; }
.thumb { flex: 1; height: 12px; background: #cdcdcd; }
.hscroll svg { width: 10px; height: 10px; margin: 0 0 0 13px; fill: none; stroke: #444; stroke-width: 2; }

.status {
  height: 18px;
  display: flex;
  align-items: center;
  gap: 13px;
  padding: 4px 0 0 4px;
  border-top: 1px solid #ccc;
}
.cmdname { font: 700 8px/12px "Liberation Mono", monospace; }
.resize { width: 9px; height: 9px; margin-left: auto; align-self: flex-end; fill: #bbb; }

.marker { position: absolute; left: 1px; top: 209px; width: 5px; height: 7px; border: 1px solid #cde; border-right: 0; background: #123; }

/* Watermark over the window */
.brand {
  position: absolute;
  right: 55px;
  bottom: 14px;
  width: 180px;
  height: 85px;
  display: flex;
  align-items: center;
  gap: 12px;
  padding-left: 14px;
  background: #233056;
  color: #d3d5dd;
}
.logo { width: 36px; height: 38px; flex: none; }
.words { display: flex; flex-direction: column; gap: 3px; }
.words strong { font: 500 26px/30px "Noto Sans CJK SC", sans-serif; }
.words span { font: 12px/12px Inter, sans-serif; }
```
